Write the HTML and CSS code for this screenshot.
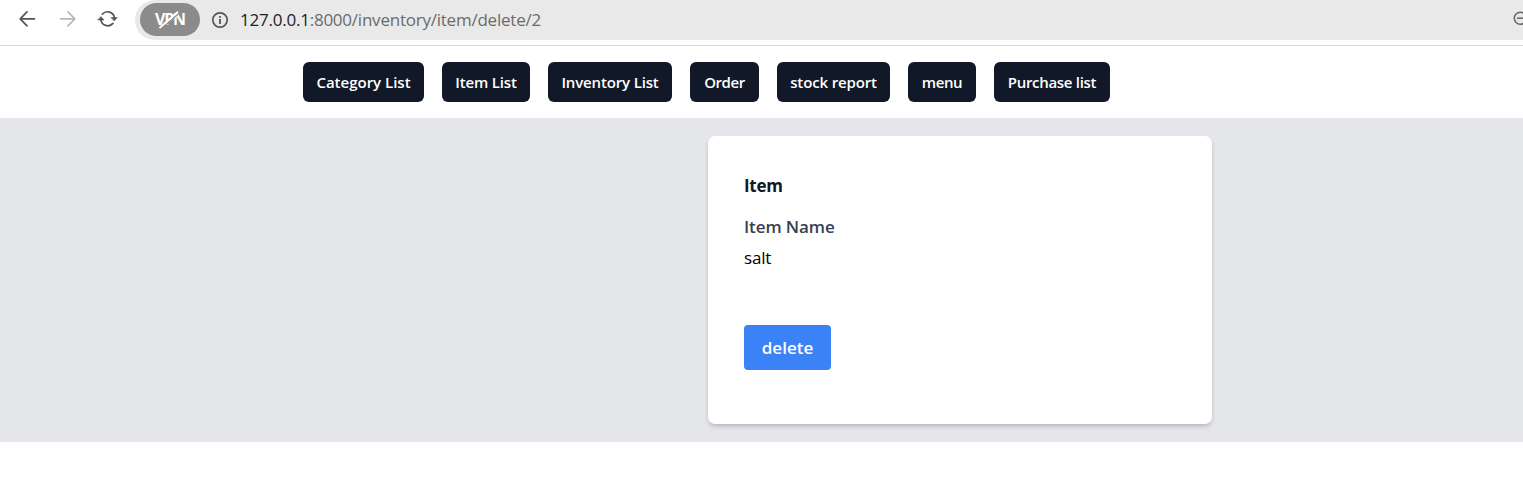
FILE: index.html
```html
<!DOCTYPE html>
<html lang="en">
<head>
<meta charset="utf-8">
<title>Delete item</title>
<link rel="stylesheet" href="styles.css">
</head>
<body>
<header class="browser">
  <svg class="nav-icons" width="135" height="40" viewBox="0 0 135 40" fill="none" stroke-width="1.7" stroke-linecap="round" stroke-linejoin="round">
    <path class="ink" d="M34.5 18.8H20.2M27 11.8l-6.8 7 6.8 7"/>
    <path class="muted" d="M60.5 18.8h14.3M68 11.8l6.8 7-6.8 7"/>
    <path class="ink" d="M102.3 14.2A7 7 0 0 1 114.5 18M113 23.4A7 7 0 0 1 100.8 19.5"/>
    <path class="head" d="M111.3 17.6h6l-3 3.2zM98 20h6l-3-3.2z"/>
  </svg>
  <div class="address">
    <div class="vpn"><span>VPN</span>
      <svg class="slash" width="30" height="20" viewBox="0 0 30 20"><path d="M6.6 19.6 24.1 4.1" stroke="#8b8b8b" stroke-width="1.4"/><path d="M5.5 18 24 1.8" stroke="#fff" stroke-width="2"/></svg>
    </div>
    <svg class="info" width="18" height="18" viewBox="0 0 18 18" fill="none"><circle cx="9" cy="9" r="7.2" stroke="#555" stroke-width="1.7"/><path d="M9 8v5M9 4.9v1.8" stroke="#555" stroke-width="1.8"/></svg>
    <div class="url"><b>127.0.0.1</b>:8000/inventory/item/delete/2</div>
    <svg class="zoom-out" width="10" height="18" viewBox="0 0 10 18" fill="none" stroke="#666" stroke-width="1.5"><circle cx="7.3" cy="7.2" r="6"/><path d="M4 7.2h6"/></svg>
  </div>
</header>
<nav class="tabs">
  <a class="tab category">Category List</a>
  <a class="tab item">Item List</a>
  <a class="tab inventory">Inventory List</a>
  <a class="tab order">Order</a>
  <a class="tab stock">stock report</a>
  <a class="tab menu">menu</a>
  <a class="tab purchase">Purchase list</a>
</nav>
<main class="content">
  <section class="card">
    <h1 class="heading">Item</h1>
    <div class="label">Item Name</div>
    <div class="value">salt</div>
    <button class="delete">delete</button>
  </section>
</main>
</body>
</html>
```
FILE: styles.css
```css
* { box-sizing: border-box; }
body { margin: 0; background: #fff; font-family: "Open Sans", "Noto Sans", sans-serif; height: 491px; overflow: hidden; }
.browser { height: 46px; display: flex; border-bottom: 1px solid #d5d5d5; }
.nav-icons { flex: none; }
.ink { stroke: #555; }
.muted { stroke: #b9b9b9; }
.head { fill: #555; stroke: #555; stroke-width: .6; }
.address { flex: 1; height: 40px; background: #e9e9e9; border-radius: 20px 0 0 20px; display: flex; align-items: center; padding: 0 0 1px 5px; }
.vpn { position: relative; width: 60px; height: 33px; border-radius: 17px; background: #8b8b8b; color: #fff; font-size: 16px; font-weight: 700; line-height: 33px; text-align: center; letter-spacing: -1.2px; }
.slash { position: absolute; left: 14px; top: 7px; }
.info { margin-left: 11px; }
.url { margin-left: 11px; font-size: 17px; letter-spacing: -0.23px; color: #6b6b6b; white-space: nowrap; }
.url b { font-weight: 400; color: #222; }
.zoom-out { margin-left: auto; }
.tabs { height: 72px; padding: 16px 0 0 303px; display: flex; gap: 18px; }
.tab { height: 40px; border-radius: 6px; background: #111827; color: #fff; font-size: 15px; font-weight: 600; line-height: 40px; text-align: center; white-space: nowrap; letter-spacing: -0.15px; }
.category { width: 121px; letter-spacing: 0; }
.item { width: 88px; }
.inventory { width: 124px; }
.order { width: 69px; letter-spacing: -0.4px; }
.stock { width: 113px; }
.menu { width: 68px; letter-spacing: -0.4px; }
.purchase { width: 116px; letter-spacing: -0.3px; }
.content { height: 324px; background: #e5e7eb; padding: 18px 0 0 708px; }
.card { width: 504px; height: 288px; padding: 36px; border-radius: 7px; background: #fff; box-shadow: 0 4px 7px -1px rgba(0,0,0,.1), 0 2px 4px -1px rgba(0,0,0,.16); }
.heading { margin: 0; font-size: 17px; font-weight: 700; line-height: 28px; color: #111827; letter-spacing: -0.3px; }
.label { margin-top: 13px; font-size: 17px; font-weight: 600; line-height: 28px; color: #374151; letter-spacing: -0.1px; }
.value { font-size: 17px; line-height: 28px; margin-top: 3px; color: #000; letter-spacing: -0.2px; }
.delete { display: block; margin-top: 53px; width: 87px; height: 45px; border: 0; padding: 0; border-radius: 4px; background: #3b82f6; color: #fff; font: 600 17px/45px "Open Sans", sans-serif; }
```
